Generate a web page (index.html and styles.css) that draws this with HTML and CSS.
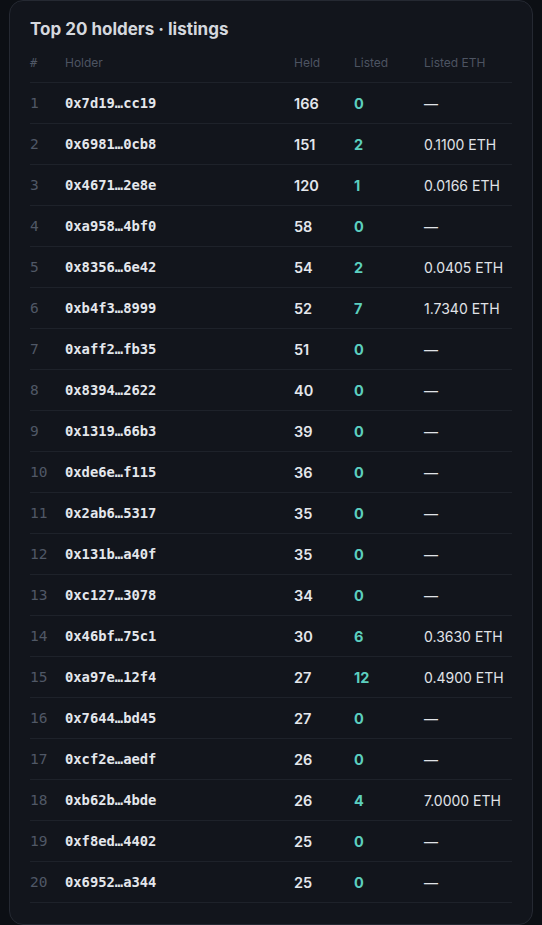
FILE: index.html
```html
<!DOCTYPE html>
<html lang="en">
<head>
    <meta charset="UTF-8">
    <meta name="viewport" content="width=device-width, initial-scale=1.0">
    <title>Top 20 holders</title>
    <link rel="stylesheet" href="styles.css">
</head>
<body>
    <div class="card">
        <h2 class="card-title">Top 20 holders · listings</h2>
        <div class="holders">
            <div class="row head">
                <span class="rank">#</span>
                <span>Holder</span>
                <span>Held</span>
                <span>Listed</span>
                <span>Listed ETH</span>
            </div>
            <div class="row"><span class="rank">1</span><span class="addr">0x7d19…cc19</span><span class="held">166</span><span class="listed">0</span><span class="eth">—</span></div>
            <div class="row"><span class="rank">2</span><span class="addr">0x6981…0cb8</span><span class="held">151</span><span class="listed">2</span><span class="eth">0.1100 ETH</span></div>
            <div class="row"><span class="rank">3</span><span class="addr">0x4671…2e8e</span><span class="held">120</span><span class="listed">1</span><span class="eth">0.0166 ETH</span></div>
            <div class="row"><span class="rank">4</span><span class="addr">0xa958…4bf0</span><span class="held">58</span><span class="listed">0</span><span class="eth">—</span></div>
            <div class="row"><span class="rank">5</span><span class="addr">0x8356…6e42</span><span class="held">54</span><span class="listed">2</span><span class="eth">0.0405 ETH</span></div>
            <div class="row"><span class="rank">6</span><span class="addr">0xb4f3…8999</span><span class="held">52</span><span class="listed">7</span><span class="eth">1.7340 ETH</span></div>
            <div class="row"><span class="rank">7</span><span class="addr">0xaff2…fb35</span><span class="held">51</span><span class="listed">0</span><span class="eth">—</span></div>
            <div class="row"><span class="rank">8</span><span class="addr">0x8394…2622</span><span class="held">40</span><span class="listed">0</span><span class="eth">—</span></div>
            <div class="row"><span class="rank">9</span><span class="addr">0x1319…66b3</span><span class="held">39</span><span class="listed">0</span><span class="eth">—</span></div>
            <div class="row"><span class="rank">10</span><span class="addr">0xde6e…f115</span><span class="held">36</span><span class="listed">0</span><span class="eth">—</span></div>
            <div class="row"><span class="rank">11</span><span class="addr">0x2ab6…5317</span><span class="held">35</span><span class="listed">0</span><span class="eth">—</span></div>
            <div class="row"><span class="rank">12</span><span class="addr">0x131b…a40f</span><span class="held">35</span><span class="listed">0</span><span class="eth">—</span></div>
            <div class="row"><span class="rank">13</span><span class="addr">0xc127…3078</span><span class="held">34</span><span class="listed">0</span><span class="eth">—</span></div>
            <div class="row"><span class="rank">14</span><span class="addr">0x46bf…75c1</span><span class="held">30</span><span class="listed">6</span><span class="eth">0.3630 ETH</span></div>
            <div class="row"><span class="rank">15</span><span class="addr">0xa97e…12f4</span><span class="held">27</span><span class="listed">12</span><span class="eth">0.4900 ETH</span></div>
            <div class="row"><span class="rank">16</span><span class="addr">0x7644…bd45</span><span class="held">27</span><span class="listed">0</span><span class="eth">—</span></div>
            <div class="row"><span class="rank">17</span><span class="addr">0xcf2e…aedf</span><span class="held">26</span><span class="listed">0</span><span class="eth">—</span></div>
            <div class="row"><span class="rank">18</span><span class="addr">0xb62b…4bde</span><span class="held">26</span><span class="listed">4</span><span class="eth">7.0000 ETH</span></div>
            <div class="row"><span class="rank">19</span><span class="addr">0xf8ed…4402</span><span class="held">25</span><span class="listed">0</span><span class="eth">—</span></div>
            <div class="row"><span class="rank">20</span><span class="addr">0x6952…a344</span><span class="held">25</span><span class="listed">0</span><span class="eth">—</span></div>
        </div>
    </div>
</body>
</html>
```

FILE: styles.css
```css
body {
    margin: 0;
    padding: 0 9px;
    background-color: #0c0f14;
    font-family: Inter, "Noto Sans", sans-serif;
    color: #e4e7ec;
}
.card {
    background-color: #12151c;
    border: 1px solid #252932;
    border-radius: 14px;
    padding: 16px 20px 21px;
}
.card-title {
    margin: 0 0 11px;
    font-size: 17px;
    line-height: 24px;
    font-weight: 700;
    color: #d5d8de;
}
.row {
    display: grid;
    grid-template-columns: 35px 229px 60px 70px 1fr;
    align-items: center;
    height: 40px;
    border-bottom: 1px solid #1e222a;
    font-size: 14.5px;
}
.row.head {
    box-sizing: border-box;
    height: 31px;
    padding-top: 3px;
    align-items: start;
    font-size: 12px;
    line-height: 16px;
    color: #4d5462;
}
.rank {
    font-family: "DejaVu Sans Mono", monospace;
    font-size: 14.5px;
    color: #505866;
}
.head .rank {
    font-size: 12px;
}
.addr {
    font-family: "DejaVu Sans Mono", monospace;
    font-size: 13.8px;
    font-weight: 700;
    color: #e4e7ec;
}
.held {
    font-weight: 600;
}
.listed {
    font-weight: 700;
    color: #5ccfbf;
}
.eth {
    font-size: 14px;
    color: #e0e3e8;
}
```
